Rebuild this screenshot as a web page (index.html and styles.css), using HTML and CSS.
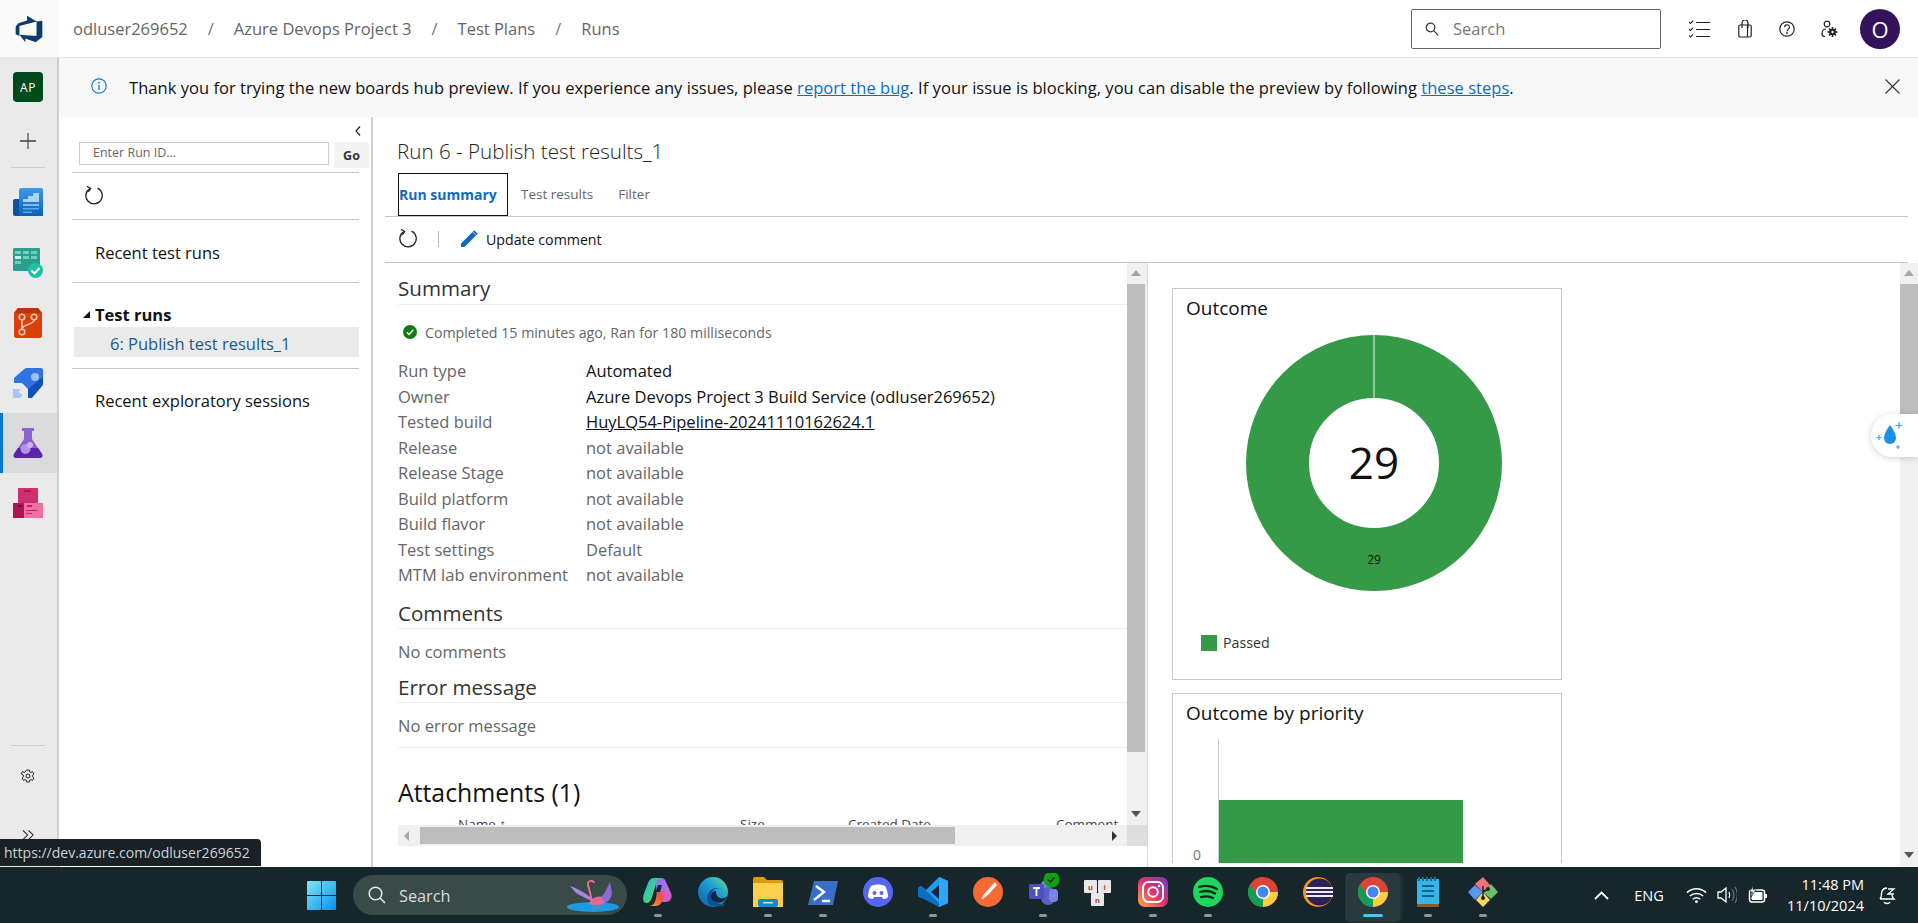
FILE: index.html
```html
<!DOCTYPE html>
<html lang="en">
<head>
<meta charset="utf-8">
<title>Runs - Test Plans</title>
<link rel="stylesheet" href="styles.css">
</head>
<body>
<header class="topbar">
  <div class="logo-cell">
    <svg class="logo" viewBox="0 0 18 18"><path fill="#0b3c6b" d="M17 4v9.74l-4 3.28-6.2-2.26V17L3.29 12.41l10.23.8V4.44L17 4zm-3.41.49L7.85 1v2.95L2.58 5.5 1 7.53v4.61l2.26 1V7.2l10.33-2.71z"/></svg>
  </div>
  <nav class="crumbs">
    <span>odluser269652</span><i>/</i><span>Azure Devops Project 3</span><i>/</i><span>Test Plans</span><i>/</i><span>Runs</span>
  </nav>
  <div class="search">
    <svg class="ico14" viewBox="0 0 14 14"><circle cx="5.5" cy="5.5" r="4.3" fill="none" stroke="#333" stroke-width="1.2"/><path d="M8.7 8.7l4.6 4.6" stroke="#333" stroke-width="1.2"/></svg>
    <span>Search</span>
  </div>
  <svg class="tool tool-a" viewBox="0 0 21 18"><path d="M0 2l1.5 1.5L4 .8M0 9l1.5 1.5L4 7.8M0 15.5L1.5 17 4 14.3" fill="none" stroke="#222" stroke-width="1.1"/><path d="M7 2.5h14M7 9.5h14M7 16.5h14" stroke="#222" stroke-width="1.2"/></svg>
  <svg class="tool tool-b" viewBox="0 0 14 18"><rect x=".8" y="5" width="12.4" height="12" rx="1.5" fill="none" stroke="#222" stroke-width="1.2"/><path d="M4 8V3a3 3 0 0 1 6 0v5M9.5 5v12" fill="none" stroke="#222" stroke-width="1.2"/></svg>
  <svg class="tool tool-c" viewBox="0 0 16 16"><circle cx="8" cy="8" r="7.2" fill="none" stroke="#222" stroke-width="1.2"/><path d="M5.6 6.2a2.4 2.4 0 1 1 3.7 2c-.9.6-1.3 1-1.3 2" fill="none" stroke="#222" stroke-width="1.2"/><circle cx="8" cy="12" r=".9" fill="#222"/></svg>
  <svg class="tool tool-d" viewBox="0 0 17 18"><circle cx="6" cy="4" r="2.8" fill="none" stroke="#222" stroke-width="1.2"/><path d="M1 14c0-3 1.5-5 4-5M1 14c0 1.5 1 2.5 3 2.5" fill="none" stroke="#222" stroke-width="1.2"/><circle cx="11.5" cy="12" r="3.3" fill="#222"/><path d="M11.5 7v10M6.5 12h10M8 8.5l7 7M15 8.5l-7 7" stroke="#222" stroke-width="1.6"/><circle cx="11.5" cy="12" r="1.2" fill="#fff"/></svg>
  <div class="avatar">O</div>
</header>

<div class="shell">
  <aside class="rail">
    <div class="badge">AP</div>
    <svg class="plus" viewBox="0 0 16 16"><path d="M0 8h16" stroke="#111" stroke-width="1.2"/><path d="M8 0v16" stroke="#444" stroke-width="1.2"/></svg>
    <div class="rail-rule"></div>
    <div class="rail-item rail-first">
      <svg class="rail-ico" viewBox="0 0 30 30"><defs><linearGradient id="bd" x1="0" y1="0" x2="0" y2="1"><stop offset="0" stop-color="#3b9bec"/><stop offset="1" stop-color="#0c62b8"/></linearGradient></defs><path d="M2 11h8v17H2a2 2 0 0 1-2-2V13a2 2 0 0 1 2-2z" fill="#0b559f"/><path d="M6 2a2 2 0 0 1 2-2h20a2 2 0 0 1 2 2v26H8a2 2 0 0 1-2-2z" fill="url(#bd)"/><path d="M10 14v-3h5V8h5V5h6v9z" fill="#a9d4f7"/><path d="M10 16h16v2H10z" fill="#7dbcf0"/><path d="M10 20h16v1.500H10zM10 23.500h9V25h-9z" fill="#5aa8ea"/></svg>
    </div>
    <div class="rail-item">
      <svg class="rail-ico" viewBox="0 0 30 30"><rect width="27" height="23" rx="1" fill="#2e9e8f"/><path d="M2 3h6v3H2zM10 3h6v3h-6zM18 3h6v3h-6zM10 8h6v3h-6zM18 8h6v3h-6zM2 13h6v3H2z" fill="#6fd0c0"/><path d="M2 8h6v3H2z" fill="#c5f3ea"/><circle cx="22.500" cy="22.500" r="7.500" fill="#1fc0a4"/><path d="M18.500 22.500l3 3 5-5.500" fill="none" stroke="#fff" stroke-width="2"/></svg>
    </div>
    <div class="rail-item">
      <svg class="rail-ico" viewBox="0 0 30 30"><path d="M5 0h20l4 5v23a2 2 0 0 1-2 2H3a2 2 0 0 1-2-2V5z" fill="#d9400c"/><path d="M5 0h20l4 5H1z" fill="#b8360a"/><g fill="none" stroke="#ffc4ad" stroke-width="1.600"><circle cx="9" cy="9" r="2.800"/><circle cx="21" cy="9" r="2.800"/><circle cx="9" cy="24" r="2.800"/><path d="M9 12v9M21 12c0 5-12 4-12 9"/></g></svg>
    </div>
    <div class="rail-item">
      <svg class="rail-ico" viewBox="0 0 30 30"><path d="M1 10L11 1.200C12 .3 13 0 14 0h14a2 2 0 0 1 2 2v14c0 .6-.2 1-.6 1.400L20 28.500c-.8 1-1.500 1.500-3 1.500h-2v-9l-6-6H1z" fill="#2f74e0"/><path d="M30 9v7c0 .6-.2 1-.6 1.400L20 28.500c-.8 1-1.500 1.500-3 1.500h-2v-9z" fill="#1450b8"/><circle cx="22" cy="9" r="4" fill="#9cc1f5"/><path d="M0 21h8l-2.500 2.500 4 4L7 30H0z" fill="#a8c6f6"/></svg>
    </div>
    <div class="rail-item rail-on">
      <svg class="rail-ico" viewBox="0 0 30 30"><path d="M9 0h12v3h-2v8l10 15c1 2 0 4-2 4H3c-2 0-3-2-2-4l10-15V3H9z" fill="#8d63cf"/><path d="M5 20h20l4 6c1 2 0 4-2 4H3c-2 0-3-2-2-4z" fill="#5a24a8"/><circle cx="12.500" cy="21" r="5" fill="#b392e6"/><circle cx="17" cy="17" r="3" fill="#cdb6ef"/></svg>
    </div>
    <div class="rail-item">
      <svg class="rail-ico" viewBox="0 0 30 30"><rect x="5" width="20" height="15" rx="1" fill="#cf2f6f"/><rect y="15" width="11" height="15" fill="#ad1457"/><rect x="11" y="15" width="19" height="15" fill="#ef6ea3"/><rect x="11" y="2" width="7" height="2" fill="#a81a58"/><rect x="5" y="17" width="4" height="2" fill="#6f0e3a"/><path d="M14 17h5v2h-5zM13 22h11v1H13zM13 25h6v1h-6z" fill="#b52a66"/></svg>
    </div>
    <div class="rail-foot">
      <div class="rail-rule"></div>
      <svg class="gear" viewBox="0 0 16 16"><path d="M6.700 1h2.600l.4 1.800 1.200.6 1.700-.7 1.300 2.200-1.300 1.300v1.600l1.300 1.300-1.300 2.200-1.700-.7-1.200.6-.4 1.800H6.700l-.4-1.800-1.200-.6-1.700.7-1.300-2.200 1.300-1.300V6.200L1.100 4.900l1.300-2.200 1.700.7 1.200-.6z" fill="none" stroke="#222"/><circle cx="8" cy="7" r="2" fill="none" stroke="#222"/></svg>
      <svg class="expand" viewBox="0 0 14 12"><path d="M1 1l5 5-5 5M7 1l5 5-5 5" fill="none" stroke="#222" stroke-width="1.100"/></svg>
    </div>
  </aside>

  <div class="workspace">
    <div class="banner">
      <svg class="info" viewBox="0 0 16 16"><circle cx="8" cy="8" r="7.200" fill="none" stroke="#0f78d4" stroke-width="1.200"/><path d="M8 7v5" stroke="#0f78d4" stroke-width="1.300"/><circle cx="8" cy="4.700" r=".9" fill="#0f78d4"/></svg>
      <p class="banner-text">Thank you for trying the new boards hub preview. If you experience any issues, please <a href="#">report the bug</a>. If your issue is blocking, you can disable the preview by following <a href="#">these steps</a>.</p>
      <svg class="close" viewBox="0 0 15 15"><path d="M.5.500l14 14M14.500.500l-14 14" stroke="#333" stroke-width="1.100"/></svg>
    </div>

    <div class="panes">
      <section class="side">
        <div class="side-top"><svg class="chev" viewBox="0 0 6 10"><path d="M5 .500L1 5l4 4.500" fill="none" stroke="#222" stroke-width="1.200"/></svg></div>
        <div class="run-id"><span class="run-input">Enter Run ID...</span><span class="go">Go</span></div>
        <div class="side-block side-refresh">
          <svg class="refresh" viewBox="0 0 18 22"><path d="M5 3.500a8.200 8.200 0 1 0 7.500-.3" fill="none" stroke="#222" stroke-width="1.300"/><path d="M2 1.200l3.600 2.300-2.200 3.400" fill="none" stroke="#222" stroke-width="1.300"/></svg>
        </div>
        <div class="side-block side-recent">Recent test runs</div>
        <div class="side-block side-tree">
          <div class="tree-head"><i class="tree-tri"></i><b>Test runs</b></div>
          <div class="tree-row">6: Publish test results_1</div>
        </div>
        <div class="side-explore">Recent exploratory sessions</div>
      </section>

      <main class="main">
        <h1 class="run-title">Run 6 - Publish test results_1</h1>
        <div class="tabs">
          <span class="tab-on">Run summary</span><span class="tab tab-a">Test results</span><span class="tab tab-b">Filter</span>
        </div>
        <div class="toolbar">
          <svg class="refresh" viewBox="0 0 18 22"><path d="M5 3.500a8.200 8.200 0 1 0 7.500-.3" fill="none" stroke="#222" stroke-width="1.300"/><path d="M2 1.200l3.600 2.300-2.200 3.400" fill="none" stroke="#222" stroke-width="1.300"/></svg>
          <i class="tool-sep"></i>
          <svg class="pencil" viewBox="0 0 18 18"><path d="M1 13.500L12.500 2l3.500 3.500L4.500 17H1z" fill="#0f6cbd"/><path d="M13.500 1l3.500 3.500" stroke="#0f6cbd" stroke-width="2"/></svg>
          <span>Update comment</span>
        </div>

        <div class="split">
          <div class="left-pane">
            <div class="left-inner">
              <div class="doc">
                <h2 class="sec">Summary</h2>
                <div class="status">
                  <svg class="ok" viewBox="0 0 14 14"><circle cx="7" cy="7" r="7" fill="#107c10"/><path d="M3.800 7.200l2.300 2.300 4.200-4.700" fill="none" stroke="#fff" stroke-width="1.500"/></svg>
                  <span>Completed 15 minutes ago, Ran for 180 milliseconds</span>
                </div>
                <dl class="facts">
                  <dt>Run type</dt><dd class="strong">Automated</dd>
                  <dt>Owner</dt><dd class="strong">Azure Devops Project 3 Build Service (odluser269652)</dd>
                  <dt>Tested build</dt><dd class="strong"><a href="#">HuyLQ54-Pipeline-20241110162624.1</a></dd>
                  <dt>Release</dt><dd>not available</dd>
                  <dt>Release Stage</dt><dd>not available</dd>
                  <dt>Build platform</dt><dd>not available</dd>
                  <dt>Build flavor</dt><dd>not available</dd>
                  <dt>Test settings</dt><dd>Default</dd>
                  <dt>MTM lab environment</dt><dd>not available</dd>
                </dl>
                <h2 class="sec sec-c">Comments</h2>
                <p class="none">No comments</p>
                <h2 class="sec sec-e">Error message</h2>
                <p class="none none-last">No error message</p>
                <h2 class="attach">Attachments (1)</h2>
                <div class="att-head"><span class="c-name">Name ↑</span><span class="c-size">Size</span><span class="c-date">Created Date</span><span class="c-com">Comment</span></div>
              </div>
              <div class="hbar">
                <i class="tri-l"></i><span class="hthumb"></span><i class="tri-r"></i>
              </div>
            </div>
            <div class="vbar vbar-l">
              <i class="tri-u"></i><span class="vthumb"></span><i class="tri-d"></i><span class="corner"></span>
            </div>
          </div>

          <div class="right-pane">
            <div class="cards">
              <article class="card card-one">
                <h3>Outcome</h3>
                <svg class="donut" viewBox="0 0 256 256">
                  <circle cx="128" cy="128" r="96.500" fill="none" stroke="#349a48" stroke-width="63"/>
                  <path d="M128 0v63" stroke="#e6f2e8" stroke-width="1"/>
                  <text class="donut-big" x="128" y="144" text-anchor="middle">29</text>
                  <text class="donut-small" x="128" y="229" text-anchor="middle">29</text>
                </svg>
                <div class="legend"><i class="swatch"></i><span>Passed</span></div>
              </article>
              <article class="card card-two">
                <h3>Outcome by priority</h3>
                <div class="bars">
                  <span class="bar-tick">0</span>
                  <div class="bar-plot"><div class="bar"></div></div>
                </div>
              </article>
            </div>
            <div class="vbar vbar-r">
              <i class="tri-u"></i><span class="vthumb-r"></span><i class="tri-d"></i>
            </div>
            <div class="drop">
              <svg viewBox="0 0 30 30" class="drop-ico"><path d="M15 4c3.500 5 6 9 6 13a6 6 0 0 1-12 0c0-4 2.500-8 6-13z" fill="#1b8fe8"/><path d="M24 1v7M20.500 4.500h7M4 14v5M1.500 16.500h5M23 24v4M21 26h4" stroke="#38a6f2" stroke-width="1.200"/></svg>
            </div>
          </div>
        </div>
      </main>
    </div>
  </div>
  <div class="url-tip">https://dev.azure.com/odluser269652</div>
</div>

<footer class="taskbar">
  <svg class="win" viewBox="0 0 29 29"><defs><linearGradient id="wg" x1="0" y1="0" x2="1" y2="1"><stop offset="0" stop-color="#7fe6fb"/><stop offset="1" stop-color="#0a8fe8"/></linearGradient></defs><path fill="url(#wg)" d="M0 1a1 1 0 0 1 1-1h13v14H0zM15 0h13a1 1 0 0 1 1 1v13H15zM0 15h14v14H1a1 1 0 0 1-1-1zM15 15h14v13a1 1 0 0 1-1 1H15z"/></svg>
  <div class="task-search">
    <svg class="ts-glass" viewBox="0 0 18 18"><circle cx="7.500" cy="7.500" r="6.300" fill="none" stroke="#e4e8e8" stroke-width="1.500"/><path d="M12 12l5 5" stroke="#e4e8e8" stroke-width="1.600"/></svg>
    <span class="ts-label">Search</span>
    <svg class="ts-art" viewBox="0 0 52 36"><ellipse cx="26" cy="30" rx="26" ry="5" fill="#1e9be0"/><path d="M22 27c2-6 8-9 14-7l2 6c-5 2-11 3-16 1z" fill="#e76a8d"/><path d="M34 20c4-3 6-9 9-15l2 11c-1 6-4 9-7 10z" fill="#8f6ad6"/><path d="M26 22C18 16 10 11 3 9l6 7c6 3 12 7 17 8z" fill="#a985e6"/><path d="M24 24c1-6-3-13-3-17 0-4 5-4 6-1" fill="none" stroke="#ef6a8f" stroke-width="2"/><path d="M27 27v5M31 27v5" stroke="#d85f7f"/></svg>
  </div>
  <div class="apps">
    <div class="app"><svg viewBox="0 0 30 30"><defs><linearGradient id="cp" x1="0" y1="0" x2="1" y2="1"><stop offset="0" stop-color="#2fb0ea"/><stop offset=".55" stop-color="#3ecf8e"/><stop offset="1" stop-color="#d8d84a"/></linearGradient><linearGradient id="cp2" x1="0" y1="0" x2="1" y2="1"><stop offset="0" stop-color="#7a7cf0"/><stop offset=".6" stop-color="#b968e6"/><stop offset="1" stop-color="#e84fa8"/></linearGradient><linearGradient id="cp3" x1="0" y1="1" x2="1" y2="0"><stop offset="0" stop-color="#f6a62e"/><stop offset=".6" stop-color="#f2553c"/><stop offset="1" stop-color="#e84f9a"/></linearGradient></defs><path d="M12 1h6c3 0 4 2 5 4l5 11c2 5-1 9-5 9h-8z" fill="url(#cp2)"/><path d="M11 1h7c-3 0-4 3-5 6L9 20c-1 4-3 6-6 6-3 0-3.500-4-2.200-9L5 6c1-3 3-5 6-5z" fill="url(#cp)"/><path d="M14 14h8c0 6-3 15-9 15H6c4 0 6-3 7-8z" fill="url(#cp3)"/><path d="M15 8h4l-2 7h-4z" fill="#14263a"/></svg><i class="dot"></i></div>
    <div class="app"><svg viewBox="0 0 30 30"><defs><linearGradient id="eg" x1="0" y1="1" x2="1" y2="0"><stop offset="0" stop-color="#0c59a4"/><stop offset=".6" stop-color="#1fa3d8"/><stop offset="1" stop-color="#6fe07a"/></linearGradient></defs><circle cx="15" cy="15" r="15" fill="url(#eg)"/><path d="M30 17c-2-5-8-7-13-5-4 2-5 7-2 11 3 4 9 5 13 3l-3 3H12l-2-3c-2-5 0-14 8-15 6 0 11 2 12 6z" fill="#0c4f96"/><path d="M18 14c-3 0-5 2-5 5 0 5 6 8 11 6 3-1 5-4 6-7-1 2-4 4-7 3-3 0-5-2-5-7z" fill="#14263a"/></svg></div>
    <div class="app"><svg viewBox="0 0 30 30"><path d="M0 2a2 2 0 0 1 2-2h9l3 3h14a2 2 0 0 1 2 2v5H0z" fill="#d99a12"/><path d="M0 6h30v24H0z" fill="#fdcf4f"/><rect x="5" y="22" width="20" height="8" rx="2" fill="#1487d8"/><rect x="10" y="25" width="10" height="1.500" fill="#bfe3fa"/></svg><i class="dot"></i></div>
    <div class="app"><svg viewBox="0 0 30 30"><path d="M6 4h24l-5 24H0z" fill="#3a6fc8"/><path d="M8 9l8 6-10 8" fill="none" stroke="#fff" stroke-width="2.400"/><path d="M14 24h8" stroke="#fff" stroke-width="2.400"/></svg><i class="dot"></i></div>
    <div class="app"><svg viewBox="0 0 30 30"><circle cx="15" cy="15" r="15" fill="#5865f2"/><path d="M8 9c4-2 10-2 14 0 2 3 3 7 3 11-2 2-4 2-5 2l-1-2H11l-1 2c-1 0-3 0-5-2 0-4 1-8 3-11z" fill="#fff"/><circle cx="11.500" cy="16" r="2" fill="#5865f2"/><circle cx="18.500" cy="16" r="2" fill="#5865f2"/></svg></div>
    <div class="app"><svg viewBox="0 0 30 30"><path d="M21 0l9 4v22l-9 4L8 17l-5 4-3-2V11l3-2 5 4z" fill="#1f9cf0"/><path d="M21 8l-8 7 8 7z" fill="#14263a"/><path d="M0 11l3-2 18 17v4L0 19z" fill="#0a6fc2"/><path d="M21 0v30l9-4V4z" fill="#2aa8f5"/></svg><i class="dot"></i></div>
    <div class="app"><svg viewBox="0 0 30 30"><circle cx="15" cy="15" r="15" fill="#f76935"/><path d="M22 5l-10 11-4 6 7-4 9-10z" fill="#fff"/><path d="M9 23l3-6 2 2z" fill="#fcd3c2"/></svg></div>
    <div class="app app-teams"><svg viewBox="0 0 34 34" class="teams"><circle cx="19" cy="12" r="5" fill="#7b83eb"/><rect x="14" y="14" width="14" height="18" rx="7" fill="#5b5fc7"/><rect x="22" y="16" width="9" height="13" rx="4" fill="#7b83eb"/><rect x="2" y="11" width="15" height="15" rx="1.500" fill="#4b53bc"/><path d="M6 15h7M9.500 15v8" stroke="#fff" stroke-width="1.800"/><circle cx="24.500" cy="6.500" r="8" fill="#12a10e"/><path d="M21 6.500l2.500 2.500 4-4.500" fill="none" stroke="#14263a" stroke-width="1.500"/></svg><i class="dot"></i></div>
    <div class="app"><svg viewBox="0 0 30 30"><rect x="1" y="3" width="13" height="13" rx="1" fill="#e8e8e8"/><rect x="15" y="3" width="13" height="13" rx="1" fill="#e8e8e8"/><rect x="8" y="16" width="13" height="13" rx="1" fill="#e8e8e8"/><text class="key" x="7.500" y="13" text-anchor="middle">u</text><text class="key" x="21.500" y="13" text-anchor="middle">i</text><text class="key" x="14.500" y="26" text-anchor="middle">n</text></svg></div>
    <div class="app"><svg viewBox="0 0 30 30"><defs><linearGradient id="ig" x1="0" y1="1" x2="1" y2="0"><stop offset="0" stop-color="#fcb045"/><stop offset=".5" stop-color="#e1306c"/><stop offset="1" stop-color="#6a3fc8"/></linearGradient></defs><rect width="30" height="30" rx="7" fill="url(#ig)"/><rect x="5" y="5" width="20" height="20" rx="5.500" fill="none" stroke="#fff" stroke-width="2"/><circle cx="15" cy="15" r="4.800" fill="none" stroke="#fff" stroke-width="2"/><circle cx="21" cy="9" r="1.300" fill="#fff"/></svg><i class="dot"></i></div>
    <div class="app"><svg viewBox="0 0 30 30"><circle cx="15" cy="15" r="15" fill="#1ed760"/><path d="M6 10c6-2 13-1 18 2M7 15c5-1.500 11-1 15 1.500M8 20c4-1 9-.8 12 1" fill="none" stroke="#10251a" stroke-width="2.300" stroke-linecap="round"/></svg><i class="dot"></i></div>
    <div class="app"><svg viewBox="0 0 30 30"><circle cx="15" cy="15" r="15" fill="#db4437"/><path d="M15 15L2 22.500A15 15 0 0 0 15 30z" fill="#0f9d58"/><path d="M15 15h15A15 15 0 0 1 15 30z" fill="#ffcd40"/><path d="M2 7.500A15 15 0 0 0 2 22.500L9 18z" fill="#0f9d58"/><circle cx="15" cy="15" r="7" fill="#fff"/><circle cx="15" cy="15" r="5.500" fill="#4285f4"/></svg></div>
    <div class="app"><svg viewBox="0 0 30 30"><circle cx="15" cy="15" r="15" fill="#f7941e"/><circle cx="16.500" cy="15" r="13.500" fill="#2c2255"/><path d="M3 11h27M3 15h27M3 19h27" stroke="#efeaf7" stroke-width="2"/></svg></div>
    <div class="app app-active"><svg viewBox="0 0 30 30"><circle cx="15" cy="15" r="15" fill="#db4437"/><path d="M15 15L2 22.500A15 15 0 0 0 15 30z" fill="#0f9d58"/><path d="M15 15h15A15 15 0 0 1 15 30z" fill="#ffcd40"/><path d="M2 7.500A15 15 0 0 0 2 22.500L9 18z" fill="#0f9d58"/><circle cx="15" cy="15" r="7" fill="#fff"/><circle cx="15" cy="15" r="5.500" fill="#4285f4"/></svg><i class="dot dot-on"></i></div>
    <div class="app"><svg viewBox="0 0 30 30"><rect x="4" y="2" width="22" height="26" fill="#35b5e8"/><path d="M4 27h22v3H4z" fill="#8a5a2b"/><path d="M6 0v4M10 0v4M14 0v4M18 0v4M22 0v4" stroke="#1a6c96" stroke-width="2"/><path d="M9 9h12M9 14h12M9 19h12" stroke="#0f5f8a" stroke-width="2"/></svg><i class="dot"></i></div>
    <div class="app"><svg viewBox="0 0 30 30"><path d="M15 15L7 7l8-7 7 8z" fill="#f2727a"/><path d="M15 15l8-8 7 8-7 7z" fill="#6cc06c"/><path d="M15 15l-8-7-7 7 7 8z" fill="#5a95f0"/><path d="M15 15l-7 8 7 7 7-7z" fill="#f6d95c"/><circle cx="15" cy="21" r="2" fill="#222"/><circle cx="20" cy="12" r="2" fill="#222"/><path d="M15 9v12M15 15l5-3" stroke="#222" stroke-width="1.500"/></svg><i class="dot"></i></div>
  </div>
  <div class="tray">
    <svg class="caret" viewBox="0 0 15 9"><path d="M1 8l6.500-6.500L14 8" fill="none" stroke="#fff" stroke-width="1.800"/></svg>
    <span class="eng">ENG</span>
    <svg class="wifi" viewBox="0 0 22 18"><g fill="none" stroke="#fff" stroke-width="1.500"><path d="M1 6.500c6-5.500 14-5.500 20 0M4 10c4-3.500 10-3.500 14 0M7 13.500c2.500-2 5.500-2 8 0"/></g><circle cx="11" cy="16" r="1.500" fill="#fff"/></svg>
    <svg class="vol" viewBox="0 0 20 18"><path d="M1 6h3l5-4v14l-5-4H1z" fill="none" stroke="#fff" stroke-width="1.300"/><path d="M12 6c1 2 1 4 0 6" fill="none" stroke="#fff" stroke-width="1.200"/><path d="M15 3c2.500 4 2.500 8 0 12M18 1c3 5 3 11 0 16" fill="none" stroke="#6c7474" stroke-width="1.200"/></svg>
    <svg class="batt" viewBox="0 0 20 18"><rect x="1.500" y="4" width="15" height="12" rx="2.500" fill="none" stroke="#fff" stroke-width="1.500"/><rect x="3.500" y="6" width="11" height="8" rx="1" fill="#fff"/><rect x="17" y="8" width="2" height="4" fill="#fff"/><path d="M5 0L2 6h3L3 11l5-7H5z" fill="#fff" stroke="#16262a" stroke-width=".6"/></svg>
    <div class="clock"><span>11:48 PM</span><span>11/10/2024</span></div>
    <svg class="bell" viewBox="0 0 18 20"><path d="M2 14c2-2 1-5 2-8 1-2 3-3 5-3M2 14h14c-1-1-2-2-2-4M6 17c1 2 5 2 6 0" fill="none" stroke="#fff" stroke-width="1.400"/><path d="M10 4h6l-6 5h6" fill="none" stroke="#fff" stroke-width="1.300"/></svg>
  </div>
</footer>
</body>
</html>
```

FILE: styles.css
```css
* { box-sizing: border-box; }
html, body { margin: 0; padding: 0; }
body {
  width: 1918px;
  height: 923px;
  overflow: hidden;
  display: flex;
  flex-direction: column;
  background: #fff;
  color: #111;
  font-family: "Open Sans", "Noto Sans", sans-serif;
  font-size: 16.5px;
}
a { color: inherit; }
svg { display: block; flex: none; }
h1, h2, h3, p, dl, dd { margin: 0; font-weight: 400; }

/* top bar */
.topbar { height: 58px; flex: none; display: flex; align-items: center; border-bottom: 1px solid #e6e6e6; }
.logo-cell { width: 59px; height: 57px; background: #fafafa; display: flex; align-items: center; justify-content: center; }
.logo { width: 30px; height: 30px; margin-left: -1px; }
.crumbs { display: flex; align-items: center; margin-left: 14px; color: #666; font-size: 16.5px; width: 1338px; }
.crumbs i { font-style: normal; width: 46px; text-align: center; color: #777; }
.search { width: 250px; height: 40px; border: 1px solid #666; border-radius: 2px; display: flex; align-items: center; padding-left: 13px; color: #777; font-size: 16.5px; }
.ico14 { width: 14px; height: 14px; margin-right: 14px; }
.tool { height: 18px; }
.tool-a { width: 21px; margin-left: 28px; }
.tool-b { width: 14px; margin-left: 28px; }
.tool-c { width: 16px; height: 16px; margin-left: 27px; }
.tool-d { width: 17px; margin-left: 26px; }
.avatar { width: 40px; height: 40px; margin-left: 22px; border-radius: 50%; background: #33145c; color: #fff; display: flex; align-items: center; justify-content: center; font-size: 22px; }

/* shell */
.shell { position: relative; flex: 1; min-height: 0; display: flex; }
.rail { width: 59px; flex: none; background: #eaeaea; border-right: 2px solid #cfcfcf; display: flex; flex-direction: column; align-items: center; padding-top: 14px; }
.badge { width: 30px; height: 30px; margin-left: -1px; background: #004b1c; border-radius: 4px; color: #fff; font-size: 12px; display: flex; align-items: center; justify-content: center; letter-spacing: .5px; flex: none; }
.plus { width: 16px; height: 16px; margin: 31px 0 0 -1px; }
.rail-rule { width: 34px; height: 1px; flex: none; background: #cfcfcf; margin: 18px 0 0 -1px; }
.rail-item { width: 100%; height: 60px; flex: none; display: flex; align-items: center; justify-content: center; padding-right: 1px; }
.rail-first { margin-top: 5px; }
.rail-on { background: #dbdbdb; border-left: 3px solid #0078d4; padding-right: 4px; }
.rail-ico { width: 30px; height: 30px; }
.rail-foot { margin-top: auto; height: 122px; flex: none; display: flex; flex-direction: column; align-items: center; }
.rail-foot .rail-rule { margin-top: 0; }
.gear { width: 16px; height: 16px; margin: 23px 0 0 -1px; }
.expand { width: 13px; height: 12px; margin: 44px 0 0 -1px; }

/* workspace */
.workspace { flex: 1; min-width: 0; display: flex; flex-direction: column; }
.banner { height: 59px; flex: none; background: #f8f8f8; display: flex; align-items: center; padding: 0 18px 0 32px; }
.info { width: 16px; height: 16px; margin-top: -3px; }
.banner-text { margin-left: 22px; font-size: 16.5px; letter-spacing: .04px; color: #111; white-space: nowrap; }
.banner-text a { color: #0f6cbd; }
.close { width: 15px; height: 15px; margin: -3px 0 0 auto; }
.panes { flex: 1; min-height: 0; display: flex; }

/* left tree */
.side { width: 314px; flex: none; border-right: 2px solid #cfcfcf; padding-left: 13px; }
.side-top { height: 25px; display: flex; justify-content: flex-end; align-items: center; padding: 2px 10px 0 0; }
.chev { width: 6px; height: 10px; }
.run-id { display: flex; align-items: flex-start; margin-left: 7px; height: 30px; }
.run-input { width: 250px; height: 23px; border: 1px solid #ccc; padding-left: 13px; font-size: 12.5px; line-height: 20px; color: #666; }
.go { width: 35px; height: 26px; margin-left: 5px; background: #f4f4f4; font-weight: 700; font-size: 12.5px; line-height: 28px; text-align: center; color: #333; }
.side-block { width: 287px; border-top: 1px solid #c8c8c8; }
.side-refresh { height: 47px; padding: 12px 0 0 13px; }
.refresh { width: 18px; height: 22px; }
.side-recent { height: 63px; padding: 21px 0 0 23px; }
.side-tree { height: 87px; padding-top: 20px; border-bottom: 1px solid #c8c8c8; }
.tree-head { height: 23px; display: flex; align-items: center; padding-left: 11px; }
.tree-tri { width: 0; height: 0; border-style: solid; border-width: 0 0 7px 7px; border-color: transparent transparent #111 transparent; margin-right: 5px; }
.tree-row { height: 30px; background: #eaeaea; margin: 1px 0 0 2px; padding-left: 36px; line-height: 33px; color: #1c5a8c; white-space: nowrap; }
.side-explore { padding: 20px 0 0 23px; }

/* main */
.main { flex: 1; min-width: 0; display: flex; flex-direction: column; padding-left: 12px; }
.run-title { height: 56px; padding: 19px 0 0 12px; font-size: 20.6px; line-height: 30px; color: #222; font-weight: 300; }
.tabs { height: 44px; flex: none; margin-right: 10px; border-bottom: 1px solid #c8c8c8; display: flex; align-items: stretch; padding-left: 13px; }
.tab-on { width: 110px; height: 43px; border: 1px solid #111; font-weight: 700; color: #0f6cbd; font-size: 14px; line-height: 42px; white-space: nowrap; }
.tab { font-size: 13.5px; color: #666; line-height: 43px; }
.tab-a { margin-left: 13px; }
.tab-b { margin-left: 25px; }
.toolbar { height: 46px; flex: none; display: flex; align-items: center; margin-right: 10px; padding: 0 0 1px 14px; border-bottom: 1px solid #c8c8c8; font-size: 14.2px; color: #111; }
.tool-sep { width: 1px; height: 16px; background: #bbb; margin: 0 21px; }
.pencil { width: 18px; height: 18px; margin-right: 8px; }
.split { flex: 1; min-height: 0; display: flex; }

/* left pane */
.left-pane { width: 763px; flex: none; border-right: 1px solid #d8d8d8; padding-bottom: 21px; display: flex; }
.left-inner { width: 742px; display: flex; flex-direction: column; padding-left: 13px; }
.doc { flex: 1; min-height: 0; overflow: hidden; }
.sec { height: 30px; margin-top: 10px; font-size: 20.6px; line-height: 30px; color: #333; border-bottom: 1px solid #eee; box-sizing: content-box; padding-bottom: 1px; }
.status { display: flex; align-items: center; height: 20px; margin-top: 17px; padding-left: 5px; color: #666; font-size: 14.2px; }
.ok { width: 14px; height: 14px; margin-right: 8px; }
.facts { display: grid; grid-template-columns: 188px 1fr; grid-auto-rows: 25.5px; margin-top: 16px; font-size: 16.5px; line-height: 25.5px; color: #666; }
.facts dt { white-space: nowrap; }
.strong { color: #111; }
.sec-c { margin-top: 10px; height: 29px; }
.none { height: 24px; margin-top: 11px; font-size: 16.5px; line-height: 24px; color: #666; }
.sec-e { margin-top: 8px; height: 29px; padding-bottom: 1px; }
.none-last { box-sizing: content-box; padding-bottom: 9px; border-bottom: 1px solid #eee; }
.attach { height: 36px; margin-top: 26px; font-size: 24.8px; line-height: 36px; color: #111; }
.att-head { display: flex; height: 28px; font-size: 13.5px; color: #444; line-height: 28px; white-space: nowrap; }
.c-name { margin-left: 60px; width: 282px; }
.c-size { width: 108px; }
.c-date { width: 208px; }
.hbar { height: 21px; flex: none; background: #f0f0f0; display: flex; align-items: center; }
.hthumb { width: 535px; height: 17px; margin-left: 11px; background: #bdbdbd; }
.tri-l { width: 0; height: 0; margin-left: 6px; border-style: solid; border-width: 5px 5px 5px 0; border-color: transparent #a6a6a6 transparent transparent; }
.tri-r { width: 0; height: 0; margin-left: 157px; border-style: solid; border-width: 5px 0 5px 5px; border-color: transparent transparent transparent #333; }
.vbar { width: 20px; flex: none; background: #f0f0f0; display: flex; flex-direction: column; align-items: center; padding-top: 7px; }
.vbar-l { height: 583px; padding-right: 2px; }
.corner { width: 20px; height: 21px; flex: none; margin-right: -2px; background: #dedede; }
.tri-u { width: 0; height: 0; flex: none; border-style: solid; border-width: 0 5px 6px 5px; border-color: transparent transparent #a6a6a6 transparent; }
.tri-d { width: 0; height: 0; flex: none; margin-top: auto; margin-bottom: 8px; border-style: solid; border-width: 6px 5px 0 5px; border-color: #555 transparent transparent transparent; }
.vthumb { width: 18px; height: 468px; margin-top: 8px; background: #bdbdbd; }
.vthumb-r { width: 18px; height: 150px; margin-top: 8px; background: #bdbdbd; }

/* right pane */
.right-pane { position: relative; flex: 1; min-width: 0; display: flex; justify-content: space-between; }
.cards { height: 600px; overflow: hidden; padding: 25px 0 0 24px; }
.card { width: 390px; border: 1px solid #c8c8c8; padding: 7px 0 0 13px; }
.card h3 { font-size: 19px; line-height: 24px; color: #111; }
.card-one { height: 392px; }
.card-two { height: 260px; margin-top: 13px; }
.donut { width: 256px; height: 256px; margin: 15px 0 0 60px; }
.donut-big { font-size: 44px; fill: #111; font-family: "Open Sans", sans-serif; }
.donut-small { font-size: 12px; fill: #111; font-family: "Open Sans", sans-serif; }
.legend { display: flex; align-items: center; margin: 42px 0 0 15px; font-size: 14.2px; color: #333; }
.swatch { width: 16px; height: 16px; background: #349a48; margin-right: 6px; }
.bars { display: flex; margin-top: 14px; }
.bar-tick { width: 32px; height: 125px; padding: 106px 0 0 7px; color: #777; font-size: 14px; line-height: 20px; }
.bar-plot { width: 245px; height: 140px; border-left: 1px solid #ccc; padding-top: 61px; }
.bar { width: 244px; height: 80px; background: #349a48; }
.vbar-r { height: 603px; width: 18px; }
.drop { position: absolute; top: 151px; right: 0; width: 47px; height: 43px; background: #fff; border-radius: 21px 0 0 21px; box-shadow: 0 1px 6px rgba(0,0,0,.18); display: flex; align-items: center; padding-left: 4px; }
.drop-ico { width: 30px; height: 30px; }

/* status-bar url */
.url-tip { position: absolute; left: 0; bottom: 1px; width: 261px; height: 27px; padding-left: 4px; background: #1b2025; color: #c6d6dc; border-radius: 0 4px 0 0; font-size: 14px; line-height: 27px; white-space: nowrap; }

/* taskbar */
.taskbar { height: 56px; flex: none; background: #16262a; display: flex; align-items: center; padding-left: 307px; color: #fff; }
.win { width: 29px; height: 29px; }
.task-search { width: 274px; height: 40px; margin-left: 17px; border-radius: 20px; background: #3a4a49; display: flex; align-items: center; padding-left: 15px; color: #d8dcdc; font-size: 16.3px; }
.ts-label { padding-top: 2px; }
.ts-glass { width: 18px; height: 18px; margin-right: 13px; }
.ts-art { width: 52px; height: 36px; margin-left: auto; margin-right: 8px; }
.apps { display: flex; margin-left: 3px; }
.app { width: 55px; height: 49px; margin-top: 5px; display: flex; flex-direction: column; align-items: center; padding-top: 4px; position: relative; }
.app svg { width: 30px; height: 30px; }
.app .teams { width: 34px; height: 34px; margin: -4px 0 0 3px; }
.key { font-size: 8px; fill: #c0392b; font-family: "Liberation Sans", sans-serif; font-weight: 700; }
.dot { position: absolute; top: 41px; width: 8px; height: 3px; border-radius: 2px; background: #8e9696; }
.dot-on { width: 20px; background: #4fc3f7; }
.app-active { background: #283a3d; border-radius: 5px; box-shadow: 3px 0 0 #1f3033; }
.tray { display: flex; align-items: center; margin-left: 84px; }
.caret { width: 15px; height: 9px; }
.eng { width: 30px; margin-left: 25px; font-size: 14.5px; text-align: center; }
.wifi { width: 21px; height: 18px; margin-left: 22px; }
.vol { width: 20px; height: 18px; margin-left: 10px; }
.batt { width: 20px; height: 18px; margin-left: 11px; }
.clock { width: 96px; display: flex; flex-direction: column; align-items: flex-end; font-size: 14.5px; line-height: 21px; }
.bell { width: 18px; height: 20px; margin-left: 14px; }
```
